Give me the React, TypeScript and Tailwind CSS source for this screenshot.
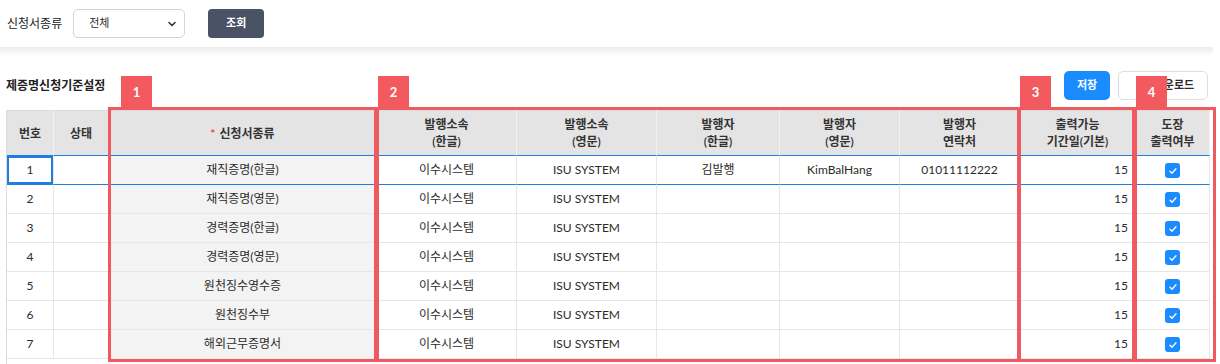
import { Download } from 'lucide-react';

const rows = [
  { no: 1, kind: '재직증명(한글)', orgKo: '이수시스템', orgEn: 'ISU SYSTEM', nameKo: '김발행', nameEn: 'KimBalHang', tel: '01011112222' },
  { no: 2, kind: '재직증명(영문)', orgKo: '이수시스템', orgEn: 'ISU SYSTEM', nameKo: '', nameEn: '', tel: '' },
  { no: 3, kind: '경력증명(한글)', orgKo: '이수시스템', orgEn: 'ISU SYSTEM', nameKo: '', nameEn: '', tel: '' },
  { no: 4, kind: '경력증명(영문)', orgKo: '이수시스템', orgEn: 'ISU SYSTEM', nameKo: '', nameEn: '', tel: '' },
  { no: 5, kind: '원천징수영수증', orgKo: '이수시스템', orgEn: 'ISU SYSTEM', nameKo: '', nameEn: '', tel: '' },
  { no: 6, kind: '원천징수부', orgKo: '이수시스템', orgEn: 'ISU SYSTEM', nameKo: '', nameEn: '', tel: '' },
  { no: 7, kind: '해외근무증명서', orgKo: '이수시스템', orgEn: 'ISU SYSTEM', nameKo: '', nameEn: '', tel: '' },
];

function Checkbox() {
  return (
    <span className="inline-flex w-[15px] h-[15px] rounded-[3px] bg-[#1a8cff] items-center justify-center align-middle">
      <svg width="10" height="10" viewBox="0 0 10 10" fill="none">
        <path d="M2 5.2l2 2 4-4.4" stroke="white" strokeWidth="1.3" strokeLinecap="round" strokeLinejoin="round" />
      </svg>
    </span>
  );
}

// red numbered annotation frame over a group of columns
function Marker({ n, box, badge }: { n: number; box: string; badge: string }) {
  return (
    <>
      <div className={`absolute border-[3px] border-[#ef5a60] pointer-events-none ${box}`} />
      <div className={`absolute w-[31px] h-[31px] bg-[#f25a5f] text-white text-[13px] font-bold flex items-center justify-center pt-[3px] ${badge}`}>
        {n}
      </div>
    </>
  );
}

export default function App() {
  const th = 'bg-[#e4e4e4] border-r border-b border-r-[#f2f2f2] font-semibold text-[#333] leading-[17px] text-center align-middle';
  return (
    <div
      className="relative w-[1220px] h-[364px] overflow-hidden bg-white text-[#2b2b2b] text-[12px]"
      style={{ fontFamily: '"Lato", "Noto Sans CJK KR", sans-serif' }}
    >
      {/* search bar */}
      <div className="flex items-center h-[47px] pl-[7px]">
        <span className="text-[12px] text-[#222]">신청서종류</span>
        <div className="ml-[11px] w-[112px] h-[29px] border border-[#d4d4d4] rounded-[5px] flex items-center justify-between pl-[15px] pr-[7px]">
          <span className="text-[11px]">전체</span>
          <svg width="10" height="10" viewBox="0 0 10 10" fill="none">
            <path d="M2 3.5l3 3 3-3" stroke="#333" strokeWidth="1.6" strokeLinecap="round" strokeLinejoin="round" />
          </svg>
        </div>
        <button className="ml-[23px] w-[56px] h-[29px] rounded-[4px] bg-[#4a5266] text-white text-[11px] font-bold">조회</button>
      </div>
      <div className="h-[9px] w-[1213px] bg-gradient-to-b from-[#ececec] to-white" />

      {/* section title + buttons */}
      <div className="flex items-center justify-between h-[54px] pt-[5px] pl-[6px] pr-[12px]">
        <span className="text-[12px] font-bold text-[#222]">제증명신청기준설정</span>
        <div className="flex gap-[8px]">
          <button className="w-[46px] h-[29px] rounded-[5px] bg-[#1a8cff] text-white text-[11px] font-bold">저장</button>
          <button className="w-[90px] h-[29px] rounded-[5px] border border-[#dedede] bg-white text-[11px] font-semibold flex items-center justify-center gap-[4px] pl-[6px]">
            <Download size={12} />
            다운로드
          </button>
        </div>
      </div>

      {/* grid */}
      <div className="ml-[6px] w-[1204px] h-[260px] border-l border-[#dcdcdc]">
        <table className="table-fixed border-separate border-spacing-0 w-[1203px]">
          <colgroup>
            <col className="w-[47px]" />
            <col className="w-[55px]" />
            <col className="w-[268px]" />
            <col className="w-[140px]" />
            <col className="w-[140px]" />
            <col className="w-[123px]" />
            <col className="w-[120px]" />
            <col className="w-[120px]" />
            <col className="w-[116px]" />
            <col className="w-[74px]" />
          </colgroup>
          <thead>
            <tr className="h-[46px]">
              <th className={`${th} border-t border-t-[#dcdcdc] border-b-[#1f7fe0]`}>번호</th>
              <th className={`${th} border-t border-t-[#dcdcdc] border-b-[#1f7fe0]`}>상태</th>
              <th className={`${th} border-t border-t-[#dcdcdc] border-b-[#1f7fe0]`}>
                <span className="text-[#e53935] mr-[4px]">*</span>신청서종류
              </th>
              <th className={`${th} border-t border-t-[#dcdcdc] border-b-[#1f7fe0]`}>발행소속<br />(한글)</th>
              <th className={`${th} border-t border-t-[#dcdcdc] border-b-[#1f7fe0]`}>발행소속<br />(영문)</th>
              <th className={`${th} border-t border-t-[#dcdcdc] border-b-[#1f7fe0]`}>발행자<br />(한글)</th>
              <th className={`${th} border-t border-t-[#dcdcdc] border-b-[#1f7fe0]`}>발행자<br />(영문)</th>
              <th className={`${th} border-t border-t-[#dcdcdc] border-b-[#1f7fe0]`}>발행자<br />연락처</th>
              <th className={`${th} border-t border-t-[#dcdcdc] border-b-[#1f7fe0]`}>출력가능<br />기간일(기본)</th>
              <th className={`${th} border-t border-t-[#dcdcdc] border-b-[#1f7fe0] border-r-[#dcdcdc]`}>도장<br />출력여부</th>
            </tr>
          </thead>
          <tbody>
            {rows.map((r, i) => {
              const first = i === 0;
              const td = `border-r border-b border-r-[#e6e6e6] ${first ? 'border-b-[#1f7fe0]' : 'border-b-[#e6e6e6]'} text-center align-middle p-0`;
              return (
                <tr key={r.no} className="h-[29px]">
                  <td className={`${td} ${first ? 'shadow-[inset_0_0_0_2px_#1f7fe0]' : ''}`}>{r.no}</td>
                  <td className={td}></td>
                  <td className={`${td} bg-[#f3f3f3]`}>{r.kind}</td>
                  <td className={td}>{r.orgKo}</td>
                  <td className={td}>{r.orgEn}</td>
                  <td className={td}>{r.nameKo}</td>
                  <td className={td}>{r.nameEn}</td>
                  <td className={td}>{r.tel}</td>
                  <td className={`${td} text-right pr-[7px]`}>15</td>
                  <td className={`${td} ${first ? 'border-r-[#1f7fe0]' : 'border-r-[#dcdcdc]'}`}>
                    <Checkbox />
                  </td>
                </tr>
              );
            })}
          </tbody>
        </table>
      </div>

      {/* annotation frames */}
      <Marker n={1} box="left-[108px] top-[107px] w-[269px] h-[255px]" badge="left-[121px] top-[76px]" />
      <Marker n={2} box="left-[376px] top-[107px] w-[644px] h-[255px]" badge="left-[378px] top-[76px]" />
      <Marker n={3} box="left-[1018px] top-[107px] w-[117px] h-[255px]" badge="left-[1020px] top-[76px]" />
      <Marker n={4} box="left-[1134px] top-[107px] w-[82px] h-[255px]" badge="left-[1136px] top-[76px]" />
    </div>
  );
}
